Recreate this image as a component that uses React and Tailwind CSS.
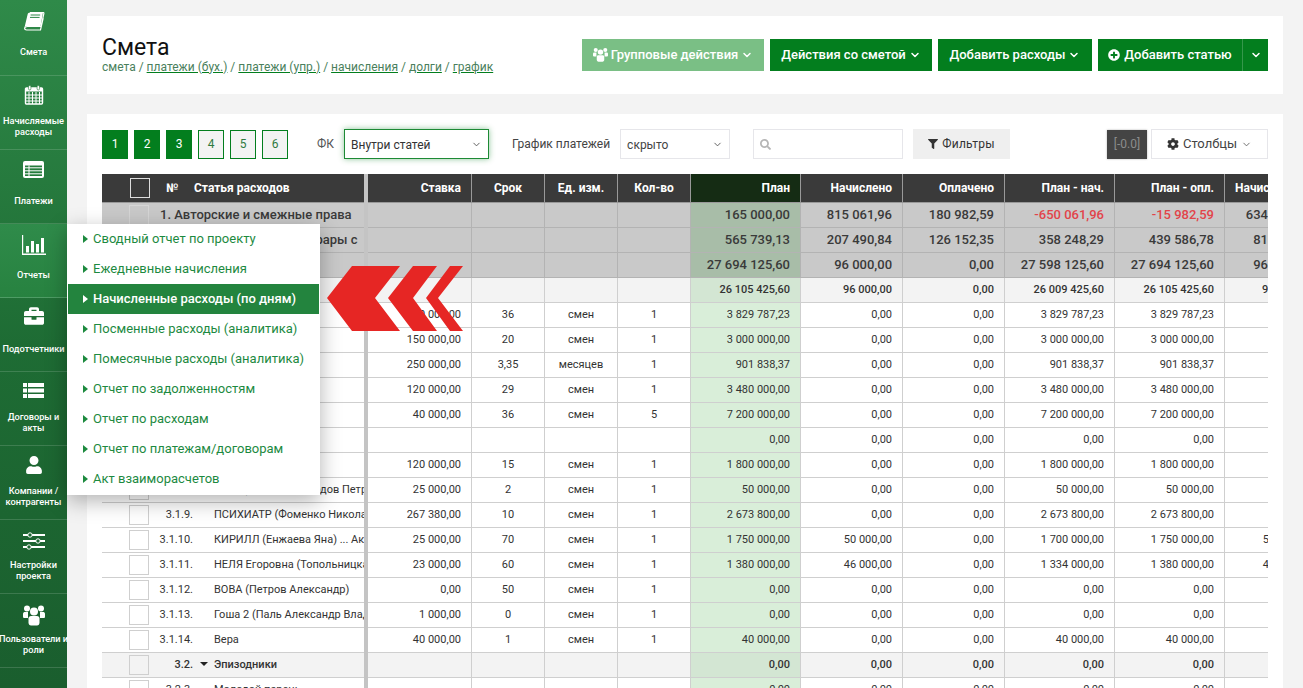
import React from "react";
import { ChevronDown } from "lucide-react";
import { FaBriefcase, FaUser, FaPlusCircle, FaFilter, FaCog, FaSearch } from "react-icons/fa";

const BookIcon = () => (
  <svg width="22" height="20" viewBox="0 0 22 20" fill="none">
    <path d="M7 0.5H20C20.8 0.5 21 1 20.8 1.8L18 14.5H4.5C2.5 14.5 1.6 15.8 1.6 16.6C1.6 17.6 2.4 18 3.6 18H17.5L20.2 6" stroke="#fff" strokeWidth="1.2" />
    <path d="M7 0.5H20L17.6 14H4.2C3 14 2 14.6 1.5 15.6L4.6 2.4C4.9 1.2 5.8 0.5 7 0.5Z" fill="#fff" />
    <path d="M7.6 3H17.2M7 5.4H16.6" stroke="#2c8747" strokeWidth="1" />
  </svg>
);

const CalendarIcon = () => (
  <svg width="20" height="20" viewBox="0 0 20 20" fill="none" className="mb-1">
    <rect x="1.5" y="3" width="17" height="16" rx="1" stroke="#fff" strokeWidth="1.4" />
    <rect x="1.5" y="3" width="17" height="3.5" fill="#fff" />
    <path d="M1.5 10H18.5M1.5 13H18.5M1.5 16H18.5M5 7V19M8.5 7V19M12 7V19M15.5 7V19" stroke="#fff" strokeWidth="1" />
    <rect x="4.5" y="0.5" width="2.4" height="4.5" rx="1.2" fill="#fff" stroke="#267c3e" strokeWidth="0.6" />
    <rect x="13.1" y="0.5" width="2.4" height="4.5" rx="1.2" fill="#fff" stroke="#267c3e" strokeWidth="0.6" />
  </svg>
);

const PaymentsIcon = () => (
  <svg width="21" height="17" viewBox="0 0 21 17" className="mb-1">
    <rect x="0" y="0" width="21" height="17" rx="2" fill="#fff" />
    <path d="M2 4.5H19V15H2Z" fill="#247c3c" />
    <path d="M2 6.8H19M2 9.8H19M2 12.8H19M6 4.5V15" stroke="#fff" strokeWidth="1" />
  </svg>
);

const ChartIcon = () => (
  <svg width="24" height="20" viewBox="0 0 24 20" fill="#fff">
    <path d="M0 0H1.2V18.6H24V20H0Z" />
    <rect x="4" y="11" width="3" height="6.5" />
    <rect x="9" y="6" width="3" height="11.5" />
    <rect x="14" y="9" width="3" height="8.5" />
    <rect x="19" y="3" width="3" height="14.5" />
  </svg>
);

const ListIcon = () => (
  <svg width="21" height="15" viewBox="0 0 21 15" fill="#fff" className="mb-[6px]">
    <rect x="0" y="0" width="4" height="4" />
    <rect x="5" y="0" width="16" height="4" />
    <rect x="0" y="5.5" width="4" height="4" />
    <rect x="5" y="5.5" width="16" height="4" />
    <rect x="0" y="11" width="4" height="4" />
    <rect x="5" y="11" width="16" height="4" />
  </svg>
);

const SlidersIcon = () => (
  <svg width="22" height="18" viewBox="0 0 22 18">
    <path d="M0 3H22M0 9H22M0 15H22" stroke="#fff" strokeWidth="2.2" />
    <circle cx="7" cy="3" r="2.2" fill="#1b6530" stroke="#fff" strokeWidth="1" />
    <circle cx="15" cy="9" r="2.2" fill="#1b6530" stroke="#fff" strokeWidth="1" />
    <circle cx="6" cy="15" r="2.2" fill="#1b6530" stroke="#fff" strokeWidth="1" />
  </svg>
);

const UsersIcon = ({ size = 22 }) => (
  <svg width={size} height={size} viewBox="0 0 22 21" fill="#fff">
    <circle cx="4" cy="4" r="3" />
    <circle cx="18" cy="4" r="3" />
    <path d="M0 9.5C0 8 1 7.5 2 7.5H5V13.5H1.5C0.5 13.5 0 13 0 12Z" />
    <path d="M22 9.5C22 8 21 7.5 20 7.5H17V13.5H20.5C21.5 13.5 22 13 22 12Z" />
    <circle cx="11" cy="7" r="4" />
    <path d="M5.5 14C5.5 12.4 6.5 11.5 8 11.5H14C15.500 11.5 16.500 12.400 16.500 14V18C16.500 20 15.500 21 14 21H8C6.500 21 5.500 20 5.500 18Z" />
  </svg>
);

const navItems = [
  { icon: <BookIcon />, label: "Смета", first: true },
  { icon: <CalendarIcon />, label: "Начисляемые\nрасходы" },
  { icon: <PaymentsIcon />, label: "Платежи" },
  { icon: <ChartIcon />, label: "Отчеты", active: true },
  { icon: <FaBriefcase size={20} className="mb-[6px]" />, label: "Подотчетники" },
  { icon: <ListIcon />, label: "Договоры и\nакты" },
  { icon: <FaUser size={18} className="mb-1" />, label: "Компании /\nконтрагенты" },
  { icon: <SlidersIcon />, label: "Настройки\nпроекта" },
  { icon: <UsersIcon />, label: "Пользователи и\nроли" },
];

const menuItems = [
  "Сводный отчет по проекту",
  "Ежедневные начисления",
  "Начисленные расходы (по дням)",
  "Посменные расходы (аналитика)",
  "Помесячные расходы (аналитика)",
  "Отчет по задолженностям",
  "Отчет по расходам",
  "Отчет по платежам/договорам",
  "Акт взаиморасчетов",
];

const colWidths = [55, 37, 20, 150, 4, 104, 73, 73, 73, 110, 102, 102, 110, 110, 97];

// kind: gray = верхний уровень, sub = подгруппа, item = обычная строка
const rows = [
  { kind: "gray", title: "1. Авторские и смежные права", v: ["", "", "", "", "165 000,00", "815 061,96", "180 982,59", "-650 061,96", "-15 982,59", "634 079,37"] },
  { kind: "gray", title: "2. Актерские и иные гонорары с", v: ["", "", "", "", "565 739,13", "207 490,84", "126 152,35", "358 248,29", "439 586,78", "81 338,49"] },
  { kind: "gray", title: "3.", v: ["", "", "", "", "27 694 125,60", "96 000,00", "0,00", "27 598 125,60", "27 694 125,60", "96 000,00"] },
  { kind: "sub", num: "3.1.", name: "", v: ["", "", "", "", "26 105 425,60", "96 000,00", "0,00", "26 009 425,60", "26 105 425,60", "96 000,00"] },
  { num: "3.1.1.", name: "", v: ["100 000,00", "36", "смен", "1", "3 829 787,23", "0,00", "0,00", "3 829 787,23", "3 829 787,23", "0,00"] },
  { num: "3.1.2.", name: "", v: ["150 000,00", "20", "смен", "1", "3 000 000,00", "0,00", "0,00", "3 000 000,00", "3 000 000,00", "0,00"] },
  { num: "3.1.3.", name: "", v: ["250 000,00", "3,35", "месяцев", "1", "901 838,37", "0,00", "0,00", "901 838,37", "901 838,37", "0,00"] },
  { num: "3.1.4.", name: "", v: ["120 000,00", "29", "смен", "1", "3 480 000,00", "0,00", "0,00", "3 480 000,00", "3 480 000,00", "0,00"] },
  { num: "3.1.5.", name: "", v: ["40 000,00", "36", "смен", "5", "7 200 000,00", "0,00", "0,00", "7 200 000,00", "7 200 000,00", "0,00"] },
  { num: "3.1.6.", name: "", v: ["", "", "", "", "0,00", "0,00", "0,00", "0,00", "0,00", "0,00"] },
  { num: "3.1.7.", name: "", v: ["120 000,00", "15", "смен", "1", "1 800 000,00", "0,00", "0,00", "1 800 000,00", "1 800 000,00", "0,00"] },
  { num: "3.1.8.", name: "ГЛЕБ (Федотов Солодов Петр)", v: ["25 000,00", "2", "смен", "1", "50 000,00", "0,00", "0,00", "50 000,00", "50 000,00", "0,00"] },
  { num: "3.1.9.", name: "ПСИХИАТР (Фоменко Николай)", v: ["267 380,00", "10", "смен", "1", "2 673 800,00", "0,00", "0,00", "2 673 800,00", "2 673 800,00", "0,00"] },
  { num: "3.1.10.", name: "КИРИЛЛ (Енжаева Яна) ... Актер", v: ["25 000,00", "70", "смен", "1", "1 750 000,00", "50 000,00", "0,00", "1 700 000,00", "1 750 000,00", "50 000,00"] },
  { num: "3.1.11.", name: "НЕЛЯ Егоровна (Топольницкая)", v: ["23 000,00", "60", "смен", "1", "1 380 000,00", "46 000,00", "0,00", "1 334 000,00", "1 380 000,00", "46 000,00"] },
  { num: "3.1.12.", name: "ВОВА (Петров Александр)", v: ["0,00", "50", "смен", "1", "0,00", "0,00", "0,00", "0,00", "0,00", "0,00"] },
  { num: "3.1.13.", name: "Гоша 2 (Паль Александр Владимирович)", v: ["1 000,00", "0", "смен", "1", "0,00", "0,00", "0,00", "0,00", "0,00", "0,00"] },
  { num: "3.1.14.", name: "Вера", v: ["40 000,00", "1", "смен", "1", "40 000,00", "0,00", "0,00", "40 000,00", "40 000,00", "0,00"] },
  { kind: "sub", num: "3.2.", name: "Эпизодники", caret: true, v: ["", "", "", "", "0,00", "0,00", "0,00", "0,00", "0,00", "0,00"] },
  { num: "3.2.3.", name: "Молодой парень", v: ["", "", "", "", "0,00", "0,00", "0,00", "0,00", "0,00", "0,00"] },
];

const headers = ["Ставка", "Срок", "Ед. изм.", "Кол-во", "План", "Начислено", "Оплачено", "План - нач.", "План - опл.", "Начислено"];

function Sidebar() {
  return (
    <div className="w-[67px] h-[688px] shrink-0 bg-gradient-to-b from-[#2f8a49] via-[#1e6c34] to-[#1a5e2e] text-white">
      {navItems.map((item) => (
        <div
          key={item.label}
          className={`border-b border-white/15 ${item.first ? "h-[76px] pt-1" : "h-[74px] pt-[3px]"} ${item.active ? "bg-gradient-to-b from-[#2f8b4a] to-[#278240]" : ""}`}
        >
          <div className="h-[36px] flex items-center justify-center">{item.icon}</div>
          <div className="h-[22px] flex items-center justify-center text-center text-[9.2px] leading-[11px] font-medium whitespace-pre">
            {item.label}
          </div>
        </div>
      ))}
    </div>
  );
}

function GreenButton({ children, light, className }) {
  return (
    <button className={`h-8 flex items-center justify-center gap-[3px] text-white text-[13px] font-medium ${light ? "bg-[#7abf85]" : "bg-[#037e1e]"} ${className}`}>
      {children}
    </button>
  );
}

function Chevron({ size = 12 }) {
  return <ChevronDown size={size} strokeWidth={3} />;
}

function Toolbar() {
  return (
    <div className="flex items-center h-[30px]">
      <div className="flex gap-[6px]">
        {[1, 2, 3, 4, 5, 6].map((n) => (
          <div
            key={n}
            className={`w-[26px] h-[29px] flex items-center justify-center text-[12px] border border-[#037e1e] ${n < 4 ? "bg-[#037e1e] text-white" : "bg-[#f3f3f3] text-[#2f7a3f]"}`}
          >
            {n}
          </div>
        ))}
      </div>
      <span className="ml-[29px] text-[12px] text-[#555]">ФК</span>
      <div className="ml-[10px] w-[145px] h-[30px] px-[6px] pt-[1px] flex items-center justify-between border border-[#1d8a35] bg-white text-[12px] text-[#333] shadow-[0_0_6px_rgba(3,126,30,0.45)]">
        Внутри статей
        <ChevronDown size={11} strokeWidth={2} className="text-[#555]" />
      </div>
      <span className="ml-[23px] text-[12px] text-[#444]">График платежей</span>
      <div className="ml-[10px] w-[110px] h-[30px] px-[6px] pt-[1px] flex items-center justify-between border border-[#e6e6ea] bg-white text-[12px] text-[#444]">
        скрыто
        <ChevronDown size={11} strokeWidth={2} className="text-[#555]" />
      </div>
      <div className="ml-[23px] w-[150px] h-[30px] px-[6px] flex items-center border border-[#e6e6ea] bg-white text-[#b5b5b5]">
        <FaSearch size={11} />
      </div>
      <div className="ml-[10px] w-[97px] h-[30px] flex items-center justify-center gap-1 bg-[#efefef] text-[12px] tracking-[0.2px] text-[#333]">
        <FaFilter size={10} />
        Фильтры
      </div>
      <div className="ml-[97px] w-[40px] h-[29px] flex items-center justify-center bg-[#444] text-[12px] text-[#8c8c8c] shadow-[0_0_2px_rgba(0,0,0,0.3)]">
        [-0.0]
      </div>
      <div className="ml-[4px] w-[117px] h-[30px] flex items-center justify-center gap-1 border border-[#e6e6ea] bg-white text-[13px] text-[#444]">
        <FaCog size={12} className="text-[#333]" />
        Столбцы
        <ChevronDown size={11} strokeWidth={2} className="text-[#666]" />
      </div>
    </div>
  );
}

function EstimateTable() {
  return (
    <div className="mt-[15px] w-[1166px] overflow-hidden">
      <table className="table-fixed w-[1220px] border-separate border-spacing-0 font-['Roboto',sans-serif]">
        <colgroup>
          {colWidths.map((w, i) => (
            <col key={i} style={{ width: w }} />
          ))}
        </colgroup>
        <thead>
          <tr className="h-[29px] text-white text-[12px] font-bold">
            <th className="bg-[#3a3a3a] border-b border-[#999] p-0 text-left">
              <div className="ml-[28px] w-5 h-5 border border-[#ddd]" />
            </th>
            <th className="bg-[#3a3a3a] border-b border-[#999] p-0 pl-[9px] text-left">№</th>
            <th colSpan={2} className="bg-[#3a3a3a] border-b border-[#999] p-0 text-left">Статья расходов</th>
            <th className="bg-[#c4c4c4] p-0" />
            {headers.map((h, i) => {
              const center = i >= 1 && i <= 3;
              const last = i === headers.length - 1;
              return (
                <th
                  key={i}
                  className={`${i === 4 ? "bg-[#152c14]" : "bg-[#3a3a3a]"} border-b border-b-[#999] border-r border-r-[#999] p-0 whitespace-nowrap overflow-hidden ${center ? "text-center" : last ? "text-left pl-[10px]" : "text-right pr-[10px]"}`}
                >
                  {h}
                </th>
              );
            })}
          </tr>
        </thead>
        <tbody>
          {rows.map((r, idx) => {
            const gray = r.kind === "gray";
            const sub = r.kind === "sub";
            const bg = gray ? "bg-[#c9c9c9]" : sub ? "bg-[#f3f3f3]" : "bg-white";
            const line = gray ? "border-[#b3b3b3]" : "border-[#cfcfcf]";
            const size = gray ? "text-[13px] font-medium text-[#3a3a3a]" : sub ? "text-[11px] font-medium text-[#333]" : "text-[11px] text-[#333]";
            return (
              <tr key={idx} className={`h-[25px] ${size}`}>
                <td className={`${bg} border-b ${line} p-0`}>
                  <div className={`ml-[27px] w-5 h-5 border ${gray ? "border-[#d6d6d6]" : "border-[#cfcfcf]"}`} />
                </td>
                {gray ? (
                  <td colSpan={3} className={`${bg} border-b ${line} p-0 pl-[3px] whitespace-nowrap overflow-hidden`}>
                    {r.title}
                  </td>
                ) : (
                  <>
                    <td className={`${bg} border-b ${line} p-0 pr-[1px] text-right whitespace-nowrap`}>{r.num}</td>
                    <td className={`${bg} border-b ${line} p-0 text-center`}>
                      {r.caret && <span className="inline-block w-0 h-0 mb-[2px] border-x-[4px] border-x-transparent border-t-[4px] border-t-[#222]" />}
                    </td>
                    <td className={`${bg} border-b ${line} p-0 whitespace-nowrap overflow-hidden`}>{r.name}</td>
                  </>
                )}
                <td className="bg-[#c4c4c4] p-0" />
                {r.v.map((val, i) => {
                  const center = i >= 1 && i <= 3;
                  const plan = i === 4;
                  const planBg = gray ? "bg-[#a8bda8]" : sub ? "bg-[#d3e6d3]" : "bg-[#d9eed9]";
                  const red = val.startsWith("-");
                  return (
                    <td
                      key={i}
                      className={`${plan ? planBg : bg} border-b border-r ${line} p-0 whitespace-nowrap ${center ? "text-center" : "text-right pr-[10px]"} ${red ? "text-[#e2444a]" : ""}`}
                    >
                      {val}
                    </td>
                  );
                })}
              </tr>
            );
          })}
        </tbody>
      </table>
    </div>
  );
}

export default function App() {
  return (
    <div className="relative w-[1303px] h-[688px] overflow-hidden flex bg-[#f3f3f3] font-['Roboto',sans-serif]">
      <Sidebar />

      <div className="flex-1 min-w-0 pl-5 pr-5 pt-4">
        <div className="h-[78px] bg-white px-[15px] flex items-center justify-between">
          <div>
            <h1 className="text-[23px] leading-[24px] text-[#111] mt-[-1px]">Смета</h1>
            <div className="text-[12px] leading-[14px] text-[#4a7f5c]">
              смета /{" "}
              <span className="underline decoration-[#037e1e]">платежи (бух.)</span> /{" "}
              <span className="underline decoration-[#037e1e]">платежи (упр.)</span> /{" "}
              <span className="underline decoration-[#037e1e]">начисления</span> /{" "}
              <span className="underline decoration-[#037e1e]">долги</span> /{" "}
              <span className="underline decoration-[#037e1e]">график</span>
            </div>
          </div>
          <div className="flex gap-[6px] mt-[-1px]">
            <GreenButton light className="w-[182px]">
              <UsersIcon size={15} />
              Групповые действия
              <Chevron />
            </GreenButton>
            <GreenButton className="w-[162px]">
              Действия со сметой
              <Chevron />
            </GreenButton>
            <GreenButton className="w-[154px]">
              Добавить расходы
              <Chevron />
            </GreenButton>
            <div className="flex h-8 bg-[#037e1e] text-white text-[13px] font-medium">
              <div className="w-[145px] flex items-center justify-center gap-1 border-r border-white/20">
                <FaPlusCircle size={12} />
                Добавить статью
              </div>
              <div className="w-[25px] flex items-center justify-center">
                <Chevron />
              </div>
            </div>
          </div>
        </div>

        <div className="mt-5 bg-white px-[15px] pt-[15px] h-[600px]">
          <Toolbar />
          <EstimateTable />
        </div>
      </div>

      {/* выпадающее меню раздела "Отчеты" */}
      <div className="absolute left-[67px] top-[224px] w-[253px] h-[271px] bg-white shadow-[0_6px_20px_rgba(0,0,0,0.3)]">
        {menuItems.map((label, i) => (
          <div
            key={label}
            className={`h-[30px] ml-[1px] mr-[1px] pl-[15px] flex items-center gap-[5px] text-[13px] ${i === 2 ? "bg-[#23843e] text-white font-medium" : "text-[#1d8a3f]"}`}
          >
            <span className={`w-0 h-0 border-y-[4px] border-y-transparent border-l-[5px] ${i === 2 ? "border-l-white" : "border-l-[#1d8a3f]"}`} />
            {label}
          </div>
        ))}
      </div>

      <svg className="absolute left-[326px] top-[265px]" width="138" height="67" viewBox="0 0 138 67" fill="#e62624">
        <polygon points="1,33 26,1 74,1 49,33 74,66 26,66" />
        <polygon points="62,33 87,1 111,1 87,33 111,66 87,66" />
        <polygon points="100,33 124,1 137,1 112,33 137,66 124,66" />
      </svg>
    </div>
  );
}
